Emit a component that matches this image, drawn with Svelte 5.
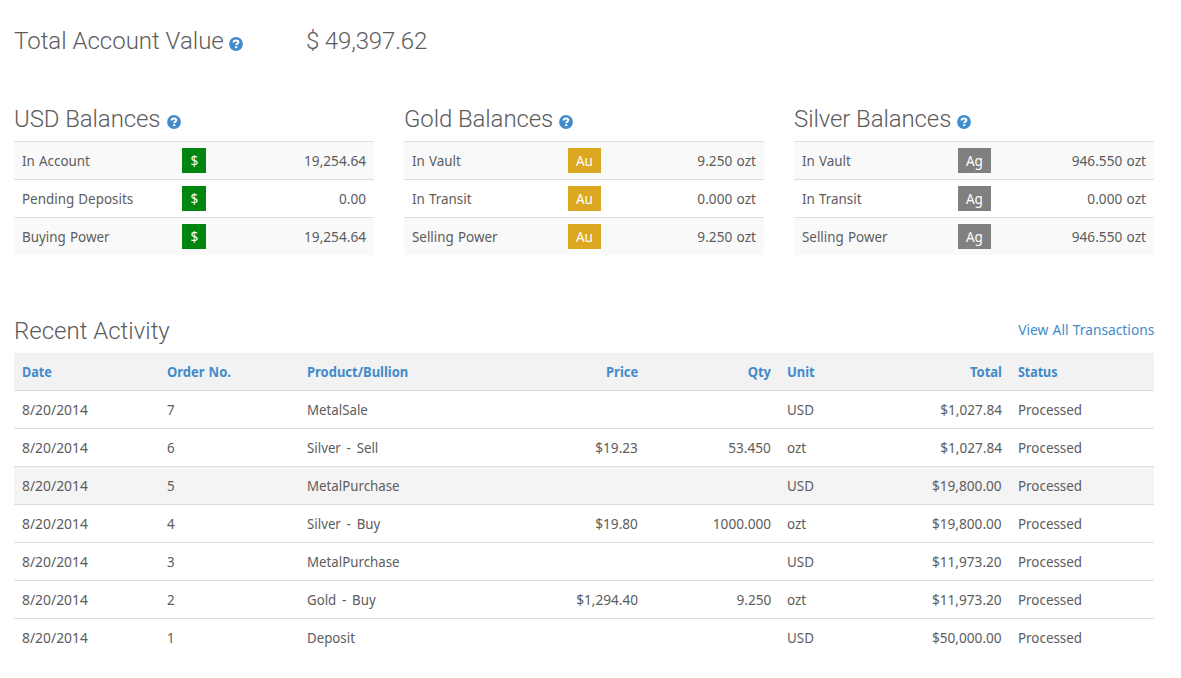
<script>
  const balances = [
    { title: 'USD Balances', kind: 'usd', symbol: '$', rows: [['In Account', '19,254.64'], ['Pending Deposits', '0.00'], ['Buying Power', '19,254.64']] },
    { title: 'Gold Balances', kind: 'gold', symbol: 'Au', rows: [['In Vault', '9.250 ozt'], ['In Transit', '0.000 ozt'], ['Selling Power', '9.250 ozt']] },
    { title: 'Silver Balances', kind: 'silver', symbol: 'Ag', rows: [['In Vault', '946.550 ozt'], ['In Transit', '0.000 ozt'], ['Selling Power', '946.550 ozt']] }
  ];
  const columns = ['Date', 'Order No.', 'Product/Bullion', 'Price', 'Qty', 'Unit', 'Total', 'Status'];
  const activity = [
    ['8/20/2014', '7', 'MetalSale', '', '', 'USD', '$1,027.84', 'Processed'],
    ['8/20/2014', '6', 'Silver - Sell', '$19.23', '53.450', 'ozt', '$1,027.84', 'Processed'],
    ['8/20/2014', '5', 'MetalPurchase', '', '', 'USD', '$19,800.00', 'Processed'],
    ['8/20/2014', '4', 'Silver - Buy', '$19.80', '1000.000', 'ozt', '$19,800.00', 'Processed'],
    ['8/20/2014', '3', 'MetalPurchase', '', '', 'USD', '$11,973.20', 'Processed'],
    ['8/20/2014', '2', 'Gold - Buy', '$1,294.40', '9.250', 'ozt', '$11,973.20', 'Processed'],
    ['8/20/2014', '1', 'Deposit', '', '', 'USD', '$50,000.00', 'Processed']
  ];
  const numeric = (i) => i === 3 || i === 4 || i === 6;
</script>

{#snippet help()}
  <svg class="help" viewBox="0 0 14 14" aria-hidden="true">
    <circle cx="7" cy="7" r="6.9" fill="#428bca" />
    <path d="M4.5 5.5C4.6 4.2 5.6 3.6 7 3.6c1.5 0 2.4.6 2.4 1.7 0 1.3-2.2 1.3-2.2 2.8" fill="none" stroke="#fff" stroke-width="2" />
    <path d="M6.1 9.1h2.2v2H6.1z" fill="#fff" />
  </svg>
{/snippet}

<main>
  <div class="account">
    <h2>Total Account Value {@render help()}</h2>
    <h2 class="value">$ 49,397.62</h2>
  </div>

  <div class="balances">
    {#each balances as b}
      <section class={b.kind}>
        <h2><span>{b.title}</span> {@render help()}</h2>
        {#each b.rows as [label, amount]}
          <div class="balance">
            <span class="t">{label}</span>
            <span class="badge"><span>{b.symbol}</span></span>
            <span class="t right">{amount}</span>
          </div>
        {/each}
      </section>
    {/each}
  </div>

  <div class="recent">
    <h2>Recent Activity</h2>
    <a class="t right" href="#all">View All Transactions</a>
  </div>

  <div class="table">
    <div class="row head">
      {#each columns as c, i}
        <div class:num={numeric(i)}><span class="t" class:right={numeric(i)}>{c}</span></div>
      {/each}
    </div>
    {#each activity as r, n}
      <div class="row" class:hover={n === 2}>
        {#each r as cell, i}
          <div class:num={numeric(i)}><span class="t" class:right={numeric(i)}>{cell}</span></div>
        {/each}
      </div>
    {/each}
  </div>
</main>

<style>
  :global(body) { background: #fff; }
  main {
    width: 1140px;
    padding: 25px 0 0 14px;
    color: #5c5c5c;
    font: 15px/21px "Noto Sans", sans-serif;
  }
  h2 {
    margin: 0;
    font: 300 24px/32px Roboto, sans-serif;
    white-space: nowrap;
  }
  .value { letter-spacing: -0.15px; }
  .help { width: 14px; height: 14px; margin-left: -1px; vertical-align: -1.5px; }
  .account { display: grid; grid-template-columns: 292px 1fr; height: 78px; }
  .balances { display: grid; grid-template-columns: repeat(3, 360px); gap: 30px; }
  .balances h2 { height: 38px; }
  .balances h2 span { letter-spacing: -0.1px; }
  .usd .help { margin-left: 1px; }
  .silver .help, .gold .help { margin-left: 0; }
  .balance {
    display: grid;
    grid-template-columns: 142px 60px 1fr;
    align-items: center;
    height: 38px;
    padding: 0 8px;
    box-sizing: border-box;
    border-top: 1px solid #ddd;
  }
  .balance:nth-of-type(odd) { background: #f9f9f9; }
  .t { display: inline-block; white-space: nowrap; transform: scaleX(0.893); transform-origin: left center; word-spacing: 0.8px; }
  .t.right { transform-origin: right center; text-align: right; }
  .balance .t.right, .row:not(.head) .num .t { transform: scaleX(0.91); }
  .badge { justify-self: center; height: 25px; text-align: center; line-height: 25px; color: #fff; }
  .badge span { display: inline-block; transform: scaleX(0.9); }
  .usd .badge { width: 24px; background: #008510; }
  .gold .badge { width: 33px; background: #dca821; }
  .silver .badge { width: 33px; background: #808080; }
  .recent { display: flex; justify-content: space-between; height: 38px; margin-top: 60px; }
  .recent a { color: #428bca; text-decoration: none; line-height: 28px; transform: scaleX(0.918); }
  .row {
    display: grid;
    grid-template-columns: 145px 140px 200px 147px 133px 100px 131px 144px;
    height: 38px;
    box-sizing: border-box;
    border-top: 1px solid #ddd;
  }
  .row > div { padding: 0 8px; line-height: 37px; }
  .row > div:first-child .t { transform: scaleX(0.925); }
  .row > div:nth-child(3) .t { word-spacing: 2.6px; transform: scaleX(0.885); }
  .row > .num { text-align: right; }
  .head { height: 37px; border-top: 0; background: #f2f2f2; color: #428bca; font-weight: 700; }
  .row.head > div .t { transform: scaleX(0.865); }
  .row.head > div:first-child .t { transform: scaleX(0.84); }
  .row.head > div:last-child .t { transform: scaleX(0.83); }
  .hover { background: #f4f4f4; }
</style>
